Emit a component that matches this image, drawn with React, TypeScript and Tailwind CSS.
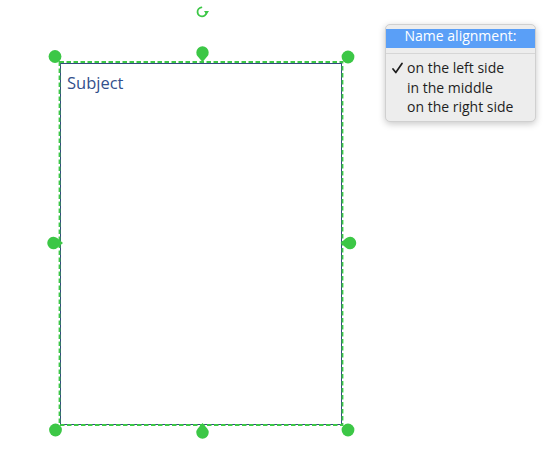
const green = "#3cc746";

function Handle({ x, y, rot }: { x: number; y: number; rot?: number }) {
  if (rot === undefined) {
    return <circle cx={x} cy={y} r={6.4} fill={green} />;
  }
  return (
    <path
      d="M -4.7 4 A 6.2 6.2 0 1 1 4.7 4 L 0 9.5 Z"
      fill={green}
      transform={`translate(${x} ${y}) rotate(${rot})`}
    />
  );
}

function Canvas() {
  return (
    <svg className="pointer-events-none absolute inset-0" width={550} height={458}>
      <rect
        x={59.5}
        y={62}
        width={283}
        height={363}
        fill="none"
        stroke={green}
        strokeWidth={1.8}
        strokeDasharray="4.5 2.5"
      />
      {/* rotate handle */}
      <path
        d="M 201.4 7.4 A 4.5 4.5 0 1 0 206.5 12.4"
        fill="none"
        stroke={green}
        strokeWidth={1.8}
        strokeLinecap="round"
      />
      <path d="M 204 11 L 209 11 L 206.5 14.8 Z" fill={green} />

      <Handle x={55} y={56.5} />
      <Handle x={202.5} y={52.5} rot={0} />
      <Handle x={348} y={57} />
      <Handle x={53.5} y={243} rot={-90} />
      <Handle x={350} y={243} rot={90} />
      <Handle x={55.5} y={430} />
      <Handle x={202.5} y={432.5} rot={180} />
      <Handle x={348} y={430} />
    </svg>
  );
}

function Check() {
  return (
    <svg width={11} height={12} viewBox="0 0 11 12">
      <path
        d="M 1 7 L 3.8 10.5 L 10 1.5"
        fill="none"
        stroke="#1e1e1e"
        strokeWidth={1.7}
        strokeLinecap="round"
        strokeLinejoin="round"
      />
    </svg>
  );
}

function AlignMenu() {
  const items = ["on the left side", "in the middle", "on the right side"];

  return (
    <div className="absolute left-[385px] top-[24px] flex w-[151px] flex-col rounded-[5px] border border-[#d0d0d0] bg-[#ededed] pt-[4px] pb-[4px] shadow-[0_2px_7px_rgba(0,0,0,0.22)]">
      <div className="flex h-[19px] items-start justify-center bg-[#5a9ff7] text-white">
        <span className="block text-[14px] leading-[14px]">Name alignment:</span>
      </div>
      <div className="mt-[5px] h-px bg-[#d6d6d6]" />
      <div className="mt-[4px] flex flex-col text-[14px] leading-[19.5px] text-[#1e1e1e]">
        {items.map((label, i) => (
          <div key={label} className="flex items-center pl-[6px]">
            <span className="flex w-[15px] items-center pt-[1px]">{i === 0 ? <Check /> : null}</span>
            <span>{label}</span>
          </div>
        ))}
      </div>
    </div>
  );
}

export default function App() {
  return (
    <div className="relative h-[458px] w-[550px] overflow-hidden bg-white font-['Open_Sans',sans-serif]">
      <div className="absolute left-[60px] top-[63px] h-[362px] w-[282px] border border-[#34497f] bg-white pl-[6px] pt-[8px]">
        <p className="text-[16.5px] leading-[22px] text-[#33508c]">Subject</p>
      </div>
      <Canvas />
      <AlignMenu />
    </div>
  );
}
